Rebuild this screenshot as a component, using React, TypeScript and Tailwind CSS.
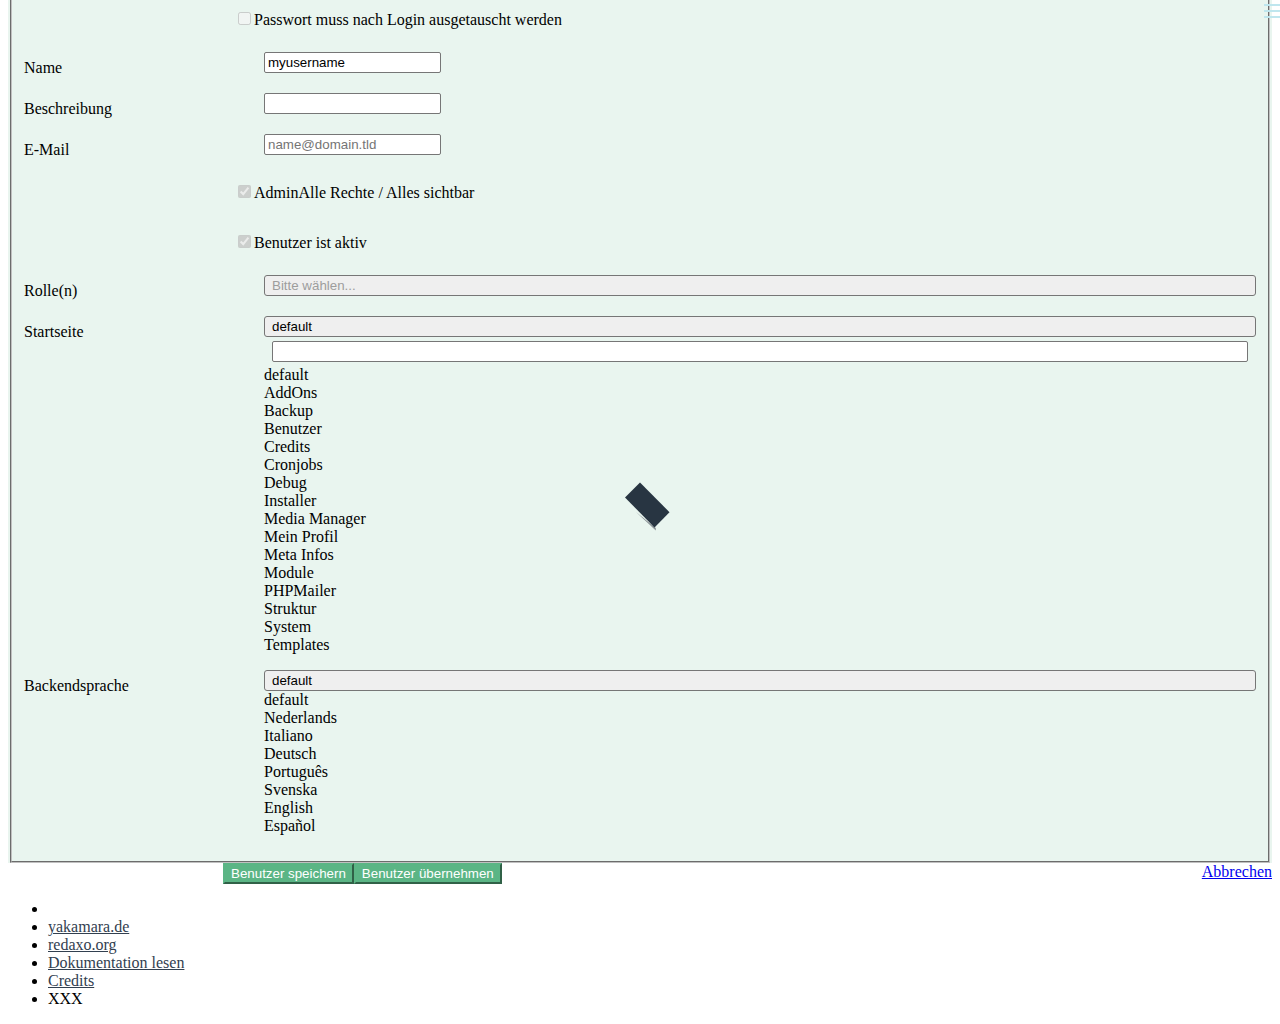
import type { ReactNode } from 'react';

const startPages = [
  'default', 'AddOns', 'Backup', 'Benutzer', 'Credits', 'Cronjobs', 'Debug', 'Installer',
  'Media Manager', 'Mein Profil', 'Meta Infos', 'Module', 'PHPMailer', 'Struktur', 'System', 'Templates',
];

const languages = ['default', 'Nederlands', 'Italiano', 'Deutsch', 'Português', 'Svenska', 'English', 'Español'];

const footerLinks = ['yakamara.de', 'redaxo.org', 'Dokumentation lesen', 'Credits'];

const inputClass =
  'block h-[21px] rounded-[2px] border border-[#767676] bg-white px-[3px] text-black placeholder:text-[#757575] [font:revert]';

function Field({ id, label, children }: { id: string; label: string; children: ReactNode }) {
  return (
    <div className="grid grid-cols-[240px_1fr]">
      <label htmlFor={id} className="self-start pt-[7px]">{label}</label>
      <div>{children}</div>
    </div>
  );
}

function Check({ label, checked = false }: { label: string; checked?: boolean }) {
  return (
    <div className="flex pt-[9px] pb-[7px] pl-[214px]">
      <label className="flex items-start gap-[3px]">
        <input type="checkbox" disabled defaultChecked={checked} className="mt-px h-[13px] w-[13px]" />
        {label}
      </label>
    </div>
  );
}

function Picker({ id, text, disabled = false }: { id: string; text: string; disabled?: boolean }) {
  return (
    <button
      id={id}
      type="button"
      disabled={disabled}
      className="block h-[21px] w-full rounded-[3px] border border-[#767676] bg-[#efefef] px-[7px] text-left text-black [font:revert] disabled:text-[#9d9d9d]"
    >
      {text}
    </button>
  );
}

function Options({ items }: { items: string[] }) {
  return (
    <ul>
      {items.map((item) => (
        <li key={item}>{item}</li>
      ))}
    </ul>
  );
}

function SubmitButton({ children }: { children: ReactNode }) {
  return (
    <button
      type="submit"
      className="h-[21px] border-2 border-[#5bb585] bg-[#5bb585] px-1.5 text-white [border-style:outset] [font:revert]"
    >
      {children}
    </button>
  );
}

export default function App() {
  return (
    <div className="relative bg-white px-2 pb-4 font-['Liberation_Serif',serif] text-[16px] leading-[18px] text-black">
      <form onSubmit={(e) => e.preventDefault()}>
        <div className="bg-[#e9f5ef] px-0.5">
          <fieldset className="flex flex-col gap-4 border-2 border-t-0 border-[#c0c0c0] px-3 pt-0.5 pb-[26px] [border-style:groove]">
            <Check label="Passwort muss nach Login ausgetauscht werden" />
            <Field id="name" label="Name">
              <input id="name" type="text" defaultValue="myusername" className={`${inputClass} w-[177px]`} />
            </Field>
            <Field id="description" label="Beschreibung">
              <input id="description" type="text" className={`${inputClass} w-[177px]`} />
            </Field>
            <Field id="email" label="E-Mail">
              <input id="email" type="email" placeholder="name@domain.tld" className={`${inputClass} w-[177px]`} />
            </Field>
            <Check label="AdminAlle Rechte / Alles sichtbar" checked />
            <Check label="Benutzer ist aktiv" checked />
            <Field id="roles" label="Rolle(n)">
              <Picker id="roles" text="Bitte wählen..." disabled />
            </Field>
            <Field id="startpage" label="Startseite">
              <Picker id="startpage" text="default" />
              <div className="px-2 py-1">
                <input type="text" aria-label="Startseite suchen" className={`${inputClass} w-full`} />
              </div>
              <Options items={startPages} />
            </Field>
            <Field id="language" label="Backendsprache">
              <Picker id="language" text="default" />
              <Options items={languages} />
            </Field>
          </fieldset>
        </div>
        <div className="flex items-start justify-between pl-[215px]">
          <div className="flex">
            <SubmitButton>Benutzer speichern</SubmitButton>
            <SubmitButton>Benutzer übernehmen</SubmitButton>
          </div>
          <a href="#" className="text-[#0000ee] underline">Abbrechen</a>
        </div>
      </form>

      <footer>
        <ul className="mt-4 list-disc pl-10">
          <li className="h-[18px]" />
          {footerLinks.map((text) => (
            <li key={text}>
              <a href="#" className="text-[#324050] underline">{text}</a>
            </li>
          ))}
          <li>XXX</li>
        </ul>
      </footer>

      <button type="button" aria-label="Menü" className="absolute top-1 right-0 flex w-4 flex-col gap-1">
        <span className="h-0.5 w-full bg-[#bfe6ee]" />
        <span className="h-0.5 w-full bg-[#bfe6ee]" />
        <span className="h-0.5 w-full bg-[#bfe6ee]" />
      </button>

      <svg aria-hidden="true" viewBox="0 0 48 50" className="absolute top-[482px] left-1/2 -ml-4 h-[50px] w-12">
        <path d="M12 30 L31.8 46 L31.8 48.5 L28 45 Z" fill="#8b9296" />
        <path d="M16 0.5 L1 15.5 L30.5 45.5 L45.5 30.2 Z" fill="#283542" />
      </svg>
    </div>
  );
}
